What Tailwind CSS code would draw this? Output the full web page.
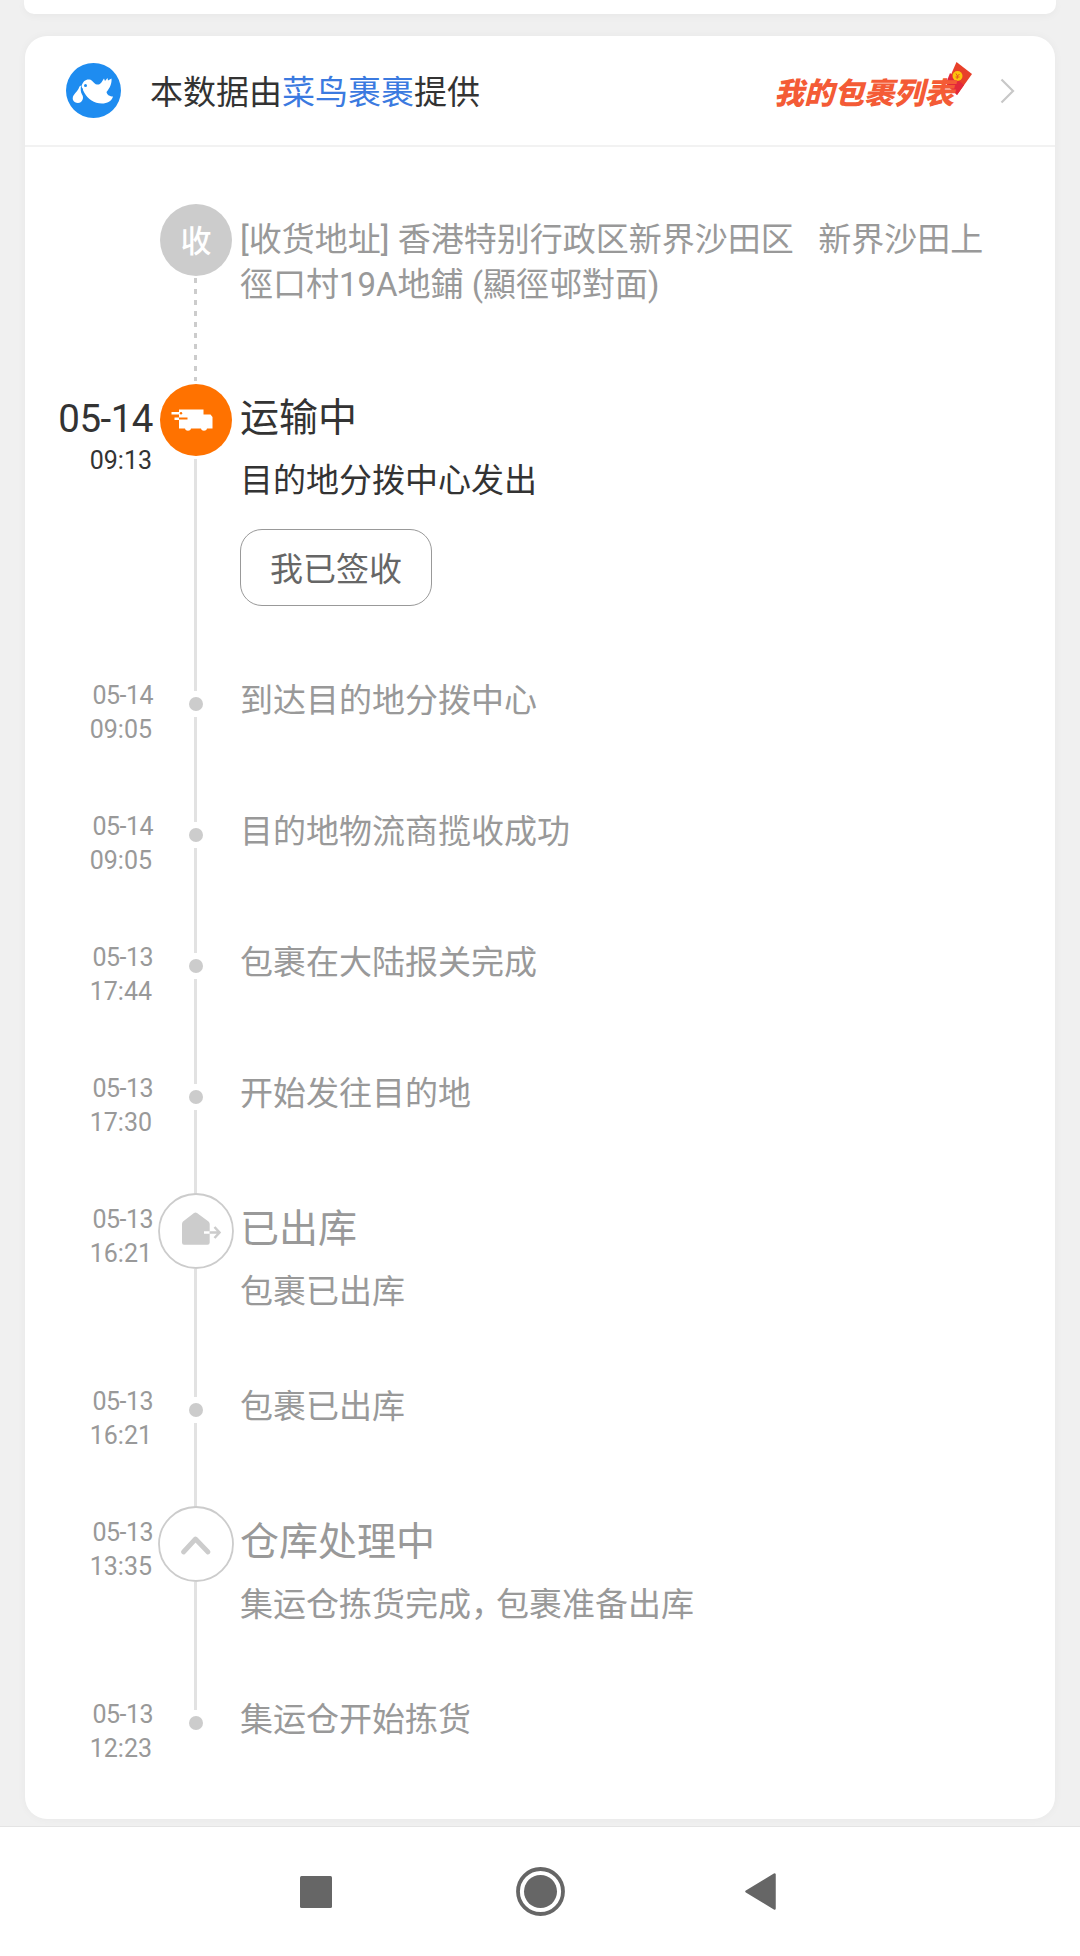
<!DOCTYPE html>
<html lang="zh-CN">
<head>
    <meta charset="UTF-8">
    <meta name="viewport" content="width=device-width, initial-scale=1.0">
    <title>物流详情</title>
    <script src="https://cdn.jsdelivr.net/npm/@tailwindcss/browser@4"></script>
    <style>
        body { font-family: Roboto, 'Noto Sans CJK SC', sans-serif; }
    </style>
</head>
<body class="flex flex-col w-[1080px] h-[1956px] overflow-hidden bg-[#f0f0f0] text-[33px] leading-[45px] text-[#999]">
    <div class="h-[14px] ml-6 mr-6 shrink-0 rounded-b-[10px] bg-white shadow-[0_2px_8px_rgba(0,0,0,0.04)]"></div>

    <main class="mt-[22px] mx-[25px] h-[1783px] shrink-0 flex flex-col rounded-[22px] bg-white shadow-[0_0_10px_rgba(0,0,0,0.04)]">
        <header class="flex items-center h-[111px] pl-[41px] pr-[40px] border-b-2 border-[#f2f2f2]">
            <svg class="w-[55px] h-[55px]" viewBox="0 0 55 55">
                <circle cx="27.5" cy="27.5" r="27.5" fill="#1e8cf0"/>
                <path fill="#fff" d="M15.500 23C17 18 20 16 23.500 16.500C27 17 27.500 21 31 21.500C35 22 36 18 38 15.500L39 18L41.500 15L42 17.500L45.500 15.500C46 20 44 25 40.500 29C41 32 44 33.500 47 33.500C46 38 41 40.500 36 40.500C28 40.500 22 36 18.500 30C17.500 28 17 27 16.500 26Z"/>
                <path fill="#fff" d="M15 22.500C14.500 26 14.500 29 16 31.500C18.500 35 16 40 12 40C7.500 40 5.500 36 7.500 32.500C9.500 29.500 12.500 27 13.500 23.500Z"/>
                <path d="M16.500 25.500C15.500 28 16 29.500 18 32" fill="none" stroke="#1e8cf0" stroke-width="1.200"/>
                <circle cx="19.500" cy="22.500" r="1.500" fill="#1e8cf0"/>
            </svg>
            <p class="ml-[29px] pt-1 text-[#333]">本数据由<span class="text-[#3b7ae0]">菜鸟裹裹</span>提供</p>
            <div class="relative ml-auto mr-[46px] pt-[5px]">
                <svg class="absolute left-[171px] -top-[5px] w-[28px] h-[36px]" viewBox="0 0 28 36">
                    <path d="M11.500 1L27 13L12 34L1.500 24Z" fill="#e8402a"/>
                    <path d="M1.500 21L12 34L19 24L5 12Z" fill="#e2283a"/>
                    <circle cx="12.500" cy="15" r="5" fill="#fbc40c"/>
                    <path d="M11 12.500L12.500 15L14.500 13M12.500 15L12 18M10.500 16H14.500" fill="none" stroke="#e8501e" stroke-width="1"/>
                </svg>
                <span class="relative block text-[30px] font-black italic text-[#f45b36] whitespace-nowrap">我的包裹列表</span>
            </div>
            <svg class="w-[15px] h-[26px]" viewBox="0 0 15 26">
                <path d="M1.500 1.500L13 13L1.500 24.500" fill="none" stroke="#c8c8c8" stroke-width="2.200"/>
            </svg>
        </header>

        <ol class="pt-[70px] pl-[33px]">
            <!-- 收货地址 -->
            <li class="flex h-[174px]">
                <div class="w-[100px]"></div>
                <div class="w-[75px] flex flex-col items-center">
                    <span class="-mt-[13px] ml-px pt-[3px] size-[72px] shrink-0 rounded-full bg-[#ccc] flex items-center justify-center text-white text-[31px] font-medium">收</span>
                    <i class="mt-[2px] mb-[10px] w-[3px] flex-1 bg-[repeating-linear-gradient(to_bottom,#ccc_0_5px,transparent_5px_11px)]"></i>
                </div>
                <p class="ml-[7px] whitespace-pre">[收货地址] 香港特别行政区新界沙田区   新界沙田上<br>徑口村19A地鋪 (顯徑邨對面)</p>
            </li>

            <!-- 当前状态 -->
            <li class="flex h-[287px] text-[#333]">
                <div class="pt-px w-[95px] flex flex-col items-end text-[25px]">
                    <span class="h-[52px] text-[38.500px] leading-[53px] tracking-[-0.5px] whitespace-nowrap">05-14</span>
                    <span class="mr-px leading-[34px]">09:13</span>
                </div>
                <div class="ml-[5px] w-[75px] flex flex-col items-center">
                    <svg class="-mt-[7px] ml-px size-[72px] shrink-0" viewBox="0 0 72 72">
                        <circle cx="36" cy="36" r="36" fill="#ff7200"/>
                        <path fill="#fff" d="M19 25.500H43.500V30.500H50.500L52.500 33V44.500H47C46.500 47.500 41.500 47.500 41 44.500H31C30.500 47.500 25.500 47.500 25 44.500H19V36H14.500V33.500H19V30.500H11.500V28H19Z"/>
                        <path d="M19 34.500H27.500" stroke="#ff7200" stroke-width="2"/>
                        <circle cx="21" cy="29.300" r="1.200" fill="#ff7200"/>
                    </svg>
                    <i class="mt-[3px] w-[3px] flex-1 bg-[#e2e2e2]"></i>
                </div>
                <div class="ml-[7px]">
                    <h2 class="text-[39px] leading-[55px]">运输中</h2>
                    <p class="mt-3">目的地分拨中心发出</p>
                    <button class="mt-[26px] pt-[3px] w-[192px] h-[77px] rounded-[22px] border border-[#999] text-[#666] leading-[45px]">我已签收</button>
                </div>
            </li>

            <li class="flex h-[131px]">
                <div class="pt-px w-[95px] text-right text-[25px] leading-[34px]"><p class="tracking-[-0.5px]">05-14</p><p class="mr-px">09:05</p></div>
                <div class="ml-[5px] w-[75px] flex flex-col items-center">
                    <i class="w-[3px] h-[13px] bg-[#e2e2e2]"></i>
                    <i class="my-[6px] size-[14px] rounded-full bg-[#ccc]"></i>
                    <i class="w-[3px] flex-1 bg-[#e2e2e2]"></i>
                </div>
                <p class="ml-[7px]">到达目的地分拨中心</p>
            </li>

            <li class="flex h-[131px]">
                <div class="pt-px w-[95px] text-right text-[25px] leading-[34px]"><p class="tracking-[-0.5px]">05-14</p><p class="mr-px">09:05</p></div>
                <div class="ml-[5px] w-[75px] flex flex-col items-center">
                    <i class="w-[3px] h-[13px] bg-[#e2e2e2]"></i>
                    <i class="my-[6px] size-[14px] rounded-full bg-[#ccc]"></i>
                    <i class="w-[3px] flex-1 bg-[#e2e2e2]"></i>
                </div>
                <p class="ml-[7px]">目的地物流商揽收成功</p>
            </li>

            <li class="flex h-[131px]">
                <div class="pt-px w-[95px] text-right text-[25px] leading-[34px]"><p class="tracking-[-0.5px]">05-13</p><p class="mr-px">17:44</p></div>
                <div class="ml-[5px] w-[75px] flex flex-col items-center">
                    <i class="w-[3px] h-[13px] bg-[#e2e2e2]"></i>
                    <i class="my-[6px] size-[14px] rounded-full bg-[#ccc]"></i>
                    <i class="w-[3px] flex-1 bg-[#e2e2e2]"></i>
                </div>
                <p class="ml-[7px]">包裹在大陆报关完成</p>
            </li>

            <li class="flex h-[131px]">
                <div class="pt-px w-[95px] text-right text-[25px] leading-[34px]"><p class="tracking-[-0.5px]">05-13</p><p class="mr-px">17:30</p></div>
                <div class="ml-[5px] w-[75px] flex flex-col items-center">
                    <i class="w-[3px] h-[13px] bg-[#e2e2e2]"></i>
                    <i class="my-[6px] size-[14px] rounded-full bg-[#ccc]"></i>
                    <i class="w-[3px] flex-1 bg-[#e2e2e2]"></i>
                </div>
                <p class="ml-[7px]">开始发往目的地</p>
            </li>

            <!-- 已出库 -->
            <li class="flex h-[182px]">
                <div class="pt-px w-[95px] text-right text-[25px] leading-[34px]"><p class="tracking-[-0.5px]">05-13</p><p class="mr-px">16:21</p></div>
                <div class="ml-[5px] w-[75px] flex flex-col items-center">
                    <svg class="-mt-[9px] ml-px size-[76px] shrink-0" viewBox="0 0 76 76">
                        <circle cx="38" cy="38" r="37" fill="#fff" stroke="#ccc" stroke-width="1.800"/>
                        <path fill="#ccc" d="M36 20Q37.500 18.800 39 20L50.500 28.500Q51.700 29.500 51.700 31V49.500Q51.700 51.700 49.500 51.700H26Q24 51.700 24 49.500V31Q24 29.500 25 28.500Z"/>
                        <path d="M46 39.500H51.700" stroke="#fff" stroke-width="2.500"/>
                        <path d="M51.700 39.500H61M56.500 34L61.500 39.500L56.500 45" fill="none" stroke="#ccc" stroke-width="2.500"/>
                    </svg>
                    <i class="w-[3px] flex-1 bg-[#e2e2e2]"></i>
                </div>
                <div class="ml-[7px]">
                    <h2 class="text-[39px] leading-[55px]">已出库</h2>
                    <p class="mt-3">包裹已出库</p>
                </div>
            </li>

            <li class="flex h-[131px]">
                <div class="pt-px w-[95px] text-right text-[25px] leading-[34px]"><p class="tracking-[-0.5px]">05-13</p><p class="mr-px">16:21</p></div>
                <div class="ml-[5px] w-[75px] flex flex-col items-center">
                    <i class="w-[3px] h-[13px] bg-[#e2e2e2]"></i>
                    <i class="my-[6px] size-[14px] rounded-full bg-[#ccc]"></i>
                    <i class="w-[3px] flex-1 bg-[#e2e2e2]"></i>
                </div>
                <p class="ml-[7px]">包裹已出库</p>
            </li>

            <!-- 仓库处理中 -->
            <li class="flex h-[182px]">
                <div class="pt-px w-[95px] text-right text-[25px] leading-[34px]"><p class="tracking-[-0.5px]">05-13</p><p class="mr-px">13:35</p></div>
                <div class="ml-[5px] w-[75px] flex flex-col items-center">
                    <svg class="-mt-[9px] ml-px size-[76px] shrink-0" viewBox="0 0 76 76">
                        <circle cx="38" cy="38" r="37" fill="#fff" stroke="#ccc" stroke-width="1.800"/>
                        <path d="M25.500 46L37.500 33L50 46" fill="none" stroke="#ccc" stroke-width="4.800" stroke-linecap="round" stroke-linejoin="round"/>
                    </svg>
                    <i class="w-[3px] flex-1 bg-[#e2e2e2]"></i>
                </div>
                <div class="ml-[7px]">
                    <h2 class="text-[39px] leading-[55px]">仓库处理中</h2>
                    <p class="mt-3">集运仓拣货完成<span class="-mr-2">，</span>包裹准备出库</p>
                </div>
            </li>

            <li class="flex h-[122px]">
                <div class="pt-px w-[95px] text-right text-[25px] leading-[34px]"><p class="tracking-[-0.5px]">05-13</p><p class="mr-px">12:23</p></div>
                <div class="ml-[5px] w-[75px] flex flex-col items-center">
                    <i class="w-[3px] h-[13px] bg-[#e2e2e2]"></i>
                    <i class="my-[6px] size-[14px] rounded-full bg-[#ccc]"></i>
                </div>
                <p class="ml-[7px]">集运仓开始拣货</p>
            </li>
        </ol>
    </main>

    <!-- 系统导航栏 -->
    <nav class="relative mt-[7px] h-[130px] shrink-0 flex items-center border-t border-[#e4e4e4] bg-white">
        <svg class="ml-[300px] w-[32px] h-[32px]" viewBox="0 0 32 32"><rect width="32" height="32" rx="1.500" fill="#666"/></svg>
        <svg class="ml-[184px] w-[49px] h-[49px]" viewBox="0 0 49 49">
            <circle cx="24.500" cy="24.500" r="22.500" fill="none" stroke="#666" stroke-width="3.800"/>
            <circle cx="24.500" cy="24.500" r="16.500" fill="#666"/>
        </svg>
        <svg class="ml-[180px] w-[31px] h-[37px]" viewBox="0 0 31 37">
            <path d="M29.500 1.500V35.500L1.500 18.500Z" fill="#666" stroke="#666" stroke-width="2.500" stroke-linejoin="round"/>
        </svg>
    </nav>
</body>
</html>
